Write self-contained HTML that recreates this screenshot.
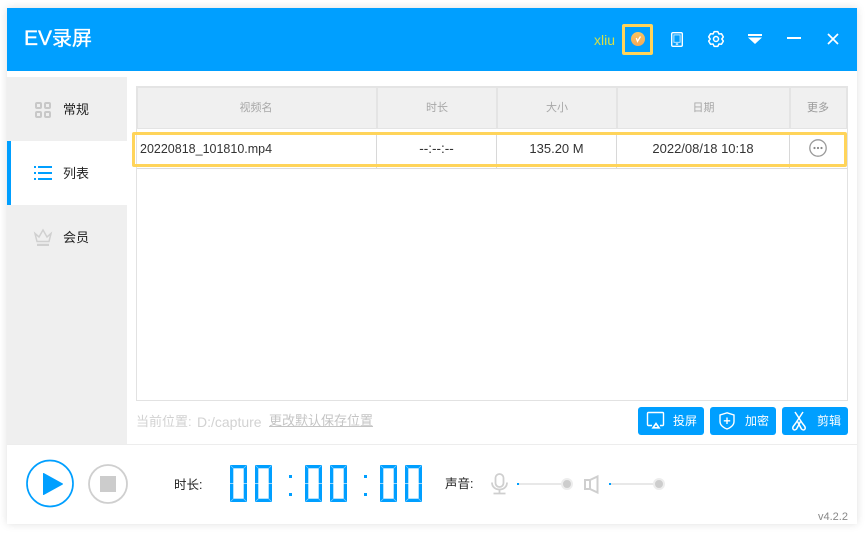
<!DOCTYPE html>
<html>
<head>
<meta charset="utf-8">
<style>
html,body{margin:0;padding:0;background:#fff;}
body{width:868px;height:534px;position:relative;overflow:hidden;font-family:"Liberation Sans","Noto Sans CJK SC",sans-serif;color:#222;}
.a{position:absolute;}
.win{left:7px;top:8px;width:850px;height:516px;background:#fff;box-shadow:0 0 8px rgba(0,0,0,.13);}
.t{position:absolute;white-space:nowrap;line-height:16px;}
.c{text-align:center;}
.btn{position:absolute;top:407px;width:66px;height:28px;background:#009fff;border-radius:3px;}
.btn span{position:absolute;left:35px;top:6px;font-size:12px;line-height:16px;color:#fff;white-space:nowrap;}
svg{position:absolute;overflow:visible;}
</style>
</head>
<body>
<div class="a win"></div>
<div class="a" style="left:7px;top:8px;width:850px;height:63px;background:#009fff;"></div>
<div class="t" style="left:24px;top:26px;font-size:20px;line-height:26px;color:#fff;-webkit-text-stroke:.35px #fff;"><span style="font-size:21px">EV</span>录屏</div>
<div class="t" style="left:594px;top:32px;font-size:14px;color:#d8df45;">xliu</div>
<div class="a" style="left:622px;top:24px;width:25px;height:25px;border:3.5px solid #ffd45a;border-radius:2px;"></div>
<svg style="left:631px;top:32px" width="14" height="14" viewBox="0 0 14 14"><defs><linearGradient id="g" x1="0" y1="0" x2="0" y2="1"><stop offset="0" stop-color="#f9c45f"/><stop offset="1" stop-color="#f3a95a"/></linearGradient></defs><circle cx="7" cy="7" r="7" fill="url(#g)"/><path d="M5.300 6L6.500 9.400L9.500 4.500" fill="none" stroke="#fff" stroke-width="1.300"/></svg>
<svg style="left:671px;top:32px" width="12" height="15" viewBox="0 0 12 15" fill="none" stroke="#fff"><rect x=".7" y=".7" width="10.600" height="13.600" rx="1.200" stroke-width="1.400"/><rect x="2.900" y="2.900" width="6.200" height="7.400" stroke-width=".9" opacity=".8"/><rect x="4.800" y="11.400" width="2.400" height="1.300" fill="#fff" stroke="none"/></svg>
<svg style="left:708px;top:31px" width="16" height="16" viewBox="0 0 16 16" fill="none" stroke="#fff" stroke-width="1.500" stroke-linejoin="round"><path d="M6.160 .63H9.840L10.900 2.980L13.470 2.720L15.310 5.910L13.800 8L15.310 10.090L13.470 13.280L10.900 13.020L9.840 15.370H6.160L5.100 13.020L2.530 13.280L.69 10.090L2.200 8L.69 5.910L2.530 2.720L5.100 2.980z"/><circle cx="8" cy="8" r="2.500"/></svg>
<svg style="left:748px;top:34px" width="14" height="11" viewBox="0 0 14 11"><rect x="0" y="0" width="14" height="2" fill="#fff"/><path d="M0 3.500H14L7 10z" fill="#fff"/></svg>
<div class="a" style="left:787px;top:37px;width:14px;height:2px;background:#fff;"></div>
<svg style="left:827px;top:33px" width="12" height="12" viewBox="0 0 12 12"><path d="M1 1L11 11M11 1L1 11" stroke="#fff" stroke-width="1.700"/></svg>

<!-- sidebar -->
<div class="a" style="left:7px;top:77px;width:120px;height:367px;background:#efefef;"></div>
<div class="a" style="left:7px;top:141px;width:120px;height:64px;background:#fff;"></div>
<div class="a" style="left:7px;top:141px;width:4px;height:64px;background:#009fff;"></div>
<svg style="left:35px;top:102px" width="16" height="16" viewBox="0 0 16 16" fill="none" stroke="#c8c8c8" stroke-width="2"><rect x="1" y="1" width="5" height="5" rx="1"/><rect x="10" y="1" width="5" height="5" rx="1"/><rect x="1" y="10" width="5" height="5" rx="1"/><rect x="10" y="10" width="5" height="5" rx="1"/></svg>
<svg style="left:34px;top:166px" width="18" height="14" viewBox="0 0 18 14" fill="#009fff"><rect x="0" y="0" width="2" height="2"/><rect x="0" y="6" width="2" height="2"/><rect x="0" y="12" width="2" height="2"/><rect x="4" y="0" width="14" height="2"/><rect x="4" y="6" width="14" height="2"/><rect x="4" y="12" width="14" height="2"/></svg>
<svg style="left:34px;top:229px" width="18" height="18" viewBox="0 0 18 18" fill="none" stroke="#d0d0d0" stroke-width="1.500"><path d="M1 4.500L5 8L9 1L13 8L17 4.500L15 12.500H3z"/><rect x="3" y="14.800" width="12" height="2.200" fill="#d0d0d0" stroke="none"/></svg>
<div class="t" style="left:63px;top:102px;font-size:13px;">常规</div>
<div class="t" style="left:63px;top:166px;font-size:13px;">列表</div>
<div class="t" style="left:63px;top:230px;font-size:13px;">会员</div>

<!-- table -->
<div class="a" style="left:136px;top:86px;width:710px;height:313px;border:1px solid #e2e2e2;"></div>
<div class="a" style="left:136px;top:86px;width:712px;height:43px;box-sizing:border-box;background:#f0f0f0;border:2px solid #e4e4e4;border-bottom-width:1px;"></div>
<div class="a" style="left:376px;top:87px;width:2px;height:42px;background:#e4e4e4;"></div>
<div class="a" style="left:496px;top:87px;width:2px;height:42px;background:#e4e4e4;"></div>
<div class="a" style="left:616px;top:87px;width:2px;height:42px;background:#e4e4e4;"></div>
<div class="a" style="left:789px;top:87px;width:2px;height:42px;background:#e4e4e4;"></div>
<div class="t c" style="left:136px;width:240px;top:100px;font-size:11px;color:#a8a8a8;">视频名</div>
<div class="t c" style="left:377px;width:120px;top:100px;font-size:11px;color:#a8a8a8;">时长</div>
<div class="t c" style="left:497px;width:120px;top:100px;font-size:11px;color:#a8a8a8;">大小</div>
<div class="t c" style="left:617px;width:173px;top:100px;font-size:11px;color:#a8a8a8;">日期</div>
<div class="t c" style="left:790px;width:56px;top:100px;font-size:11px;color:#999;">更多</div>
<div class="a" style="left:137px;top:168px;width:710px;height:1px;background:#dcdcdc;"></div>
<div class="a" style="left:376px;top:132px;width:1px;height:36px;background:#d8d8d8;"></div>
<div class="a" style="left:496px;top:132px;width:1px;height:36px;background:#d8d8d8;"></div>
<div class="a" style="left:616px;top:132px;width:1px;height:36px;background:#d8d8d8;"></div>
<div class="a" style="left:789px;top:132px;width:1px;height:36px;background:#d8d8d8;"></div>
<div class="a" style="left:132px;top:132px;width:709px;height:29px;border:3px solid #ffd45a;border-radius:2px;"></div>
<div class="t" style="left:140px;top:141px;font-size:12.500px;color:#333;">20220818_101810.mp4</div>
<div class="t c" style="left:377px;width:119px;top:141px;font-size:13.500px;color:#333;">--:--:--</div>
<div class="t c" style="left:497px;width:119px;top:141px;font-size:13px;color:#333;">135.20 M</div>
<div class="t c" style="left:617px;width:172px;top:141px;font-size:13px;color:#333;">2022/08/18 10:18</div>
<svg style="left:809px;top:139px" width="18" height="18" viewBox="0 0 18 18"><circle cx="9" cy="9" r="8.200" fill="none" stroke="#999" stroke-width="1.300"/><circle cx="5.500" cy="9" r="1.100" fill="#888"/><circle cx="9" cy="9" r="1.100" fill="#888"/><circle cx="12.500" cy="9" r="1.100" fill="#888"/></svg>

<!-- path -->
<div class="t" style="left:136px;top:414px;font-size:13px;color:#d2d2d2;">当前位置:</div>
<div class="t" style="left:197px;top:414px;font-size:14px;color:#d2d2d2;">D:/capture</div>
<div class="t" style="left:269px;top:413px;font-size:13px;color:#c4c4c4;text-decoration:underline;">更改默认保存位置</div>

<!-- buttons -->
<div class="btn" style="left:638px;"><span>投屏</span>
<svg style="left:9px;top:5px" width="18" height="18" viewBox="0 0 18 18" fill="none" stroke="#fff" stroke-width="1.400"><path d="M5 13.500H1.500a1 1 0 0 1-1-1V1.500a1 1 0 0 1 1-1h14a1 1 0 0 1 1 1v11a1 1 0 0 1-1 1H13"/><path d="M9 11.500L12 15.800H6z" stroke-width="1.600"/></svg></div>
<div class="btn" style="left:710px;"><span>加密</span>
<svg style="left:9px;top:5px" width="16" height="18" viewBox="0 0 16 18" fill="none" stroke="#fff" stroke-width="1.400"><path d="M8 .8L15 3V9.500C15 13.500 11 16 8 17C5 16 1 13.500 1 9.500V3z"/><path d="M8 5.500V12M4.800 8.800H11.200"/></svg></div>
<div class="btn" style="left:782px;"><span>剪辑</span>
<svg style="left:9px;top:4px" width="16" height="20" viewBox="0 0 16 20" fill="none" stroke="#fff" stroke-width="1.500"><path d="M4 1L11.500 12.500C13 14.500 15 16 14 18C13 19.500 11.500 19 10.500 18L6.500 10.500"/><path d="M12 1L4.500 12.500C3 14.500 1 16 2 18C3 19.500 4.500 19 5.500 18L9.500 10.500"/></svg></div>

<!-- bottom bar -->
<div class="a" style="left:7px;top:444px;width:850px;height:1px;background:#ededed;"></div>
<svg style="left:26px;top:460px" width="48" height="48" viewBox="0 0 48 48"><circle cx="24" cy="23.500" r="23" fill="none" stroke="#009fff" stroke-width="1.700"/><path d="M17.500 13.500L36.500 24L17.500 34.500z" fill="#009fff" stroke="#009fff" stroke-linejoin="round"/></svg>
<svg style="left:88px;top:464px" width="40" height="40" viewBox="0 0 40 40"><circle cx="20" cy="20" r="19" fill="none" stroke="#cfcfcf" stroke-width="1.800"/><rect x="12" y="12" width="16" height="16" fill="#cccccc"/></svg>
<div class="t" style="left:174px;top:477px;font-size:12.500px;">时长:</div>

<svg style="left:229px;top:465px" width="196" height="38" viewBox="0 0 196 38" fill="#009fff">
<defs><g id="d">
<rect x="0" y="0" width="17" height="3.300"/>
<rect x="0" y="33.700" width="17" height="3.300"/>
<rect x="0" y="0" width="3.300" height="18.200"/>
<rect x="0" y="18.800" width="3.300" height="18.200"/>
<rect x="13.700" y="0" width="3.300" height="18.200"/>
<rect x="13.700" y="18.800" width="3.300" height="18.200"/>
<path d="M.3 .3L3.300 3.300M16.700 .3L13.700 3.300M.3 36.700L3.300 33.700M16.700 36.700L13.700 33.700" stroke="#7fcfff" stroke-width=".7"/>
</g></defs>
<use href="#d" x="1"/><use href="#d" x="26"/>
<rect x="60" y="10" width="3" height="3"/><rect x="60" y="28" width="3" height="3"/>
<use href="#d" x="76"/><use href="#d" x="101"/>
<rect x="135" y="10" width="3" height="3"/><rect x="135" y="28" width="3" height="3"/>
<use href="#d" x="151"/><use href="#d" x="176"/>
</svg>

<div class="t" style="left:445px;top:476px;font-size:12.500px;">声音:</div>
<svg style="left:491px;top:473px" width="17" height="22" viewBox="0 0 17 22" fill="none" stroke="#cfcfcf" stroke-width="1.800"><rect x="4.500" y="1" width="8" height="13" rx="4"/><path d="M1 9.500C1 14 4.500 16.500 8.500 16.500S16 14 16 9.500M8.500 16.500V20M2.500 20.500H14.500"/></svg>
<div class="a" style="left:517px;top:483px;width:50px;height:2px;background:#e8e8e8;"></div>
<div class="a" style="left:517px;top:483px;width:2px;height:2px;background:#009fff;"></div>
<div class="a" style="left:561px;top:478px;width:8px;height:8px;border:2px solid #ededed;background:#cdcdcd;border-radius:50%;"></div>
<svg style="left:584px;top:475px" width="15" height="19" viewBox="0 0 15 19" fill="none" stroke="#cfcfcf" stroke-width="2"><path d="M1 5H6V14H1zM6 5L13.500 1.500V17.500L6 14"/></svg>
<div class="a" style="left:609px;top:483px;width:50px;height:2px;background:#e8e8e8;"></div>
<div class="a" style="left:609px;top:483px;width:2px;height:2px;background:#009fff;"></div>
<div class="a" style="left:653px;top:478px;width:8px;height:8px;border:2px solid #ededed;background:#cdcdcd;border-radius:50%;"></div>
<div class="t" style="left:818px;top:509px;font-size:11px;color:#888;">v4.2.2</div>
</body>
</html>
